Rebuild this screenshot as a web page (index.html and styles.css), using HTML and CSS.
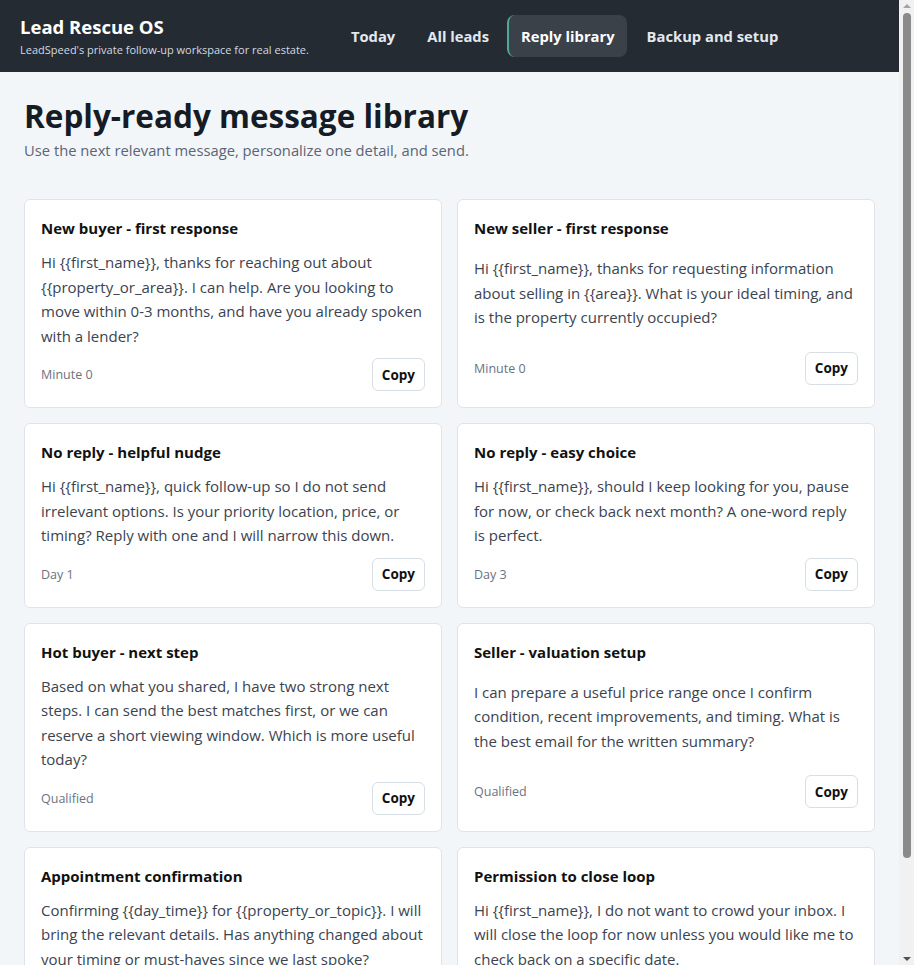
FILE: index.html
```html
<!DOCTYPE html>
<html lang="en">
<head>
  <meta charset="UTF-8">
  <title>Reply library - Lead Rescue OS</title>
  <link rel="stylesheet" href="styles.css">
</head>
<body>
  <header class="topbar">
    <div class="brand">
      <div class="brand-name">Lead Rescue OS</div>
      <div class="brand-tag">LeadSpeed's private follow-up workspace for real estate.</div>
    </div>
    <nav class="nav">
      <a href="#" class="nav-link">Today</a>
      <a href="#" class="nav-link">All leads</a>
      <a href="#" class="nav-link active">Reply library</a>
      <a href="#" class="nav-link">Backup and setup</a>
    </nav>
  </header>

  <main class="page">
    <div class="page-head">
      <h1>Reply-ready message library</h1>
      <p>Use the next relevant message, personalize one detail, and send.</p>
    </div>

    <div class="reply-grid">
      <div class="reply-card">
        <h3>New buyer - first response</h3>
        <p class="reply-text">Hi {{first_name}}, thanks for reaching out about {{property_or_area}}. I can help. Are you looking to move within 0-3 months, and have you already spoken with a lender?</p>
        <div class="reply-foot">
          <span class="reply-stage">Minute 0</span>
          <button class="copy-btn">Copy</button>
        </div>
      </div>

      <div class="reply-card">
        <h3>New seller - first response</h3>
        <p class="reply-text">Hi {{first_name}}, thanks for requesting information about selling in {{area}}. What is your ideal timing, and is the property currently occupied?</p>
        <div class="reply-foot">
          <span class="reply-stage">Minute 0</span>
          <button class="copy-btn">Copy</button>
        </div>
      </div>

      <div class="reply-card">
        <h3>No reply - helpful nudge</h3>
        <p class="reply-text">Hi {{first_name}}, quick follow-up so I do not send irrelevant options. Is your priority location, price, or timing? Reply with one and I will narrow this down.</p>
        <div class="reply-foot">
          <span class="reply-stage">Day 1</span>
          <button class="copy-btn">Copy</button>
        </div>
      </div>

      <div class="reply-card">
        <h3>No reply - easy choice</h3>
        <p class="reply-text">Hi {{first_name}}, should I keep looking for you, pause for now, or check back next month? A one-word reply is perfect.</p>
        <div class="reply-foot">
          <span class="reply-stage">Day 3</span>
          <button class="copy-btn">Copy</button>
        </div>
      </div>

      <div class="reply-card">
        <h3>Hot buyer - next step</h3>
        <p class="reply-text">Based on what you shared, I have two strong next steps. I can send the best matches first, or we can reserve a short viewing window. Which is more useful today?</p>
        <div class="reply-foot">
          <span class="reply-stage">Qualified</span>
          <button class="copy-btn">Copy</button>
        </div>
      </div>

      <div class="reply-card">
        <h3>Seller - valuation setup</h3>
        <p class="reply-text">I can prepare a useful price range once I confirm condition, recent improvements, and timing. What is the best email for the written summary?</p>
        <div class="reply-foot">
          <span class="reply-stage">Qualified</span>
          <button class="copy-btn">Copy</button>
        </div>
      </div>

      <div class="reply-card">
        <h3>Appointment confirmation</h3>
        <p class="reply-text">Confirming {{day_time}} for {{property_or_topic}}. I will bring the relevant details. Has anything changed about your timing or must-haves since we last spoke?</p>
        <div class="reply-foot">
          <span class="reply-stage">Booked</span>
          <button class="copy-btn">Copy</button>
        </div>
      </div>

      <div class="reply-card">
        <h3>Permission to close loop</h3>
        <p class="reply-text">Hi {{first_name}}, I do not want to crowd your inbox. I will close the loop for now unless you would like me to check back on a specific date.</p>
        <div class="reply-foot">
          <span class="reply-stage">Day 14</span>
          <button class="copy-btn">Copy</button>
        </div>
      </div>
    </div>
  </main>

  <div class="scroll-rail">
    <span class="rail-arrow up"></span>
    <div class="rail-thumb"></div>
    <span class="rail-arrow down"></span>
  </div>
</body>
</html>
```
FILE: styles.css
```css
* {
  box-sizing: border-box;
}

body {
  margin: 0;
  padding-right: 15px;
  font-family: 'Open Sans', 'Noto Sans', sans-serif;
  background: #f3f6f9;
  color: #111827;
}

/* top bar */
.topbar {
  display: flex;
  align-items: center;
  gap: 28px;
  height: 72px;
  padding: 0 20px;
  background: #242b33;
  color: #fff;
}

.brand-name {
  font-size: 18.5px;
  font-weight: 700;
  line-height: 24px;
}

.brand-tag {
  font-size: 11px;
  line-height: 16px;
  margin-top: 3px;
  color: #d3d9e0;
}

.nav {
  display: flex;
  gap: 6px;
}

.nav-link {
  padding: 10px 12px;
  border-radius: 8px;
  border-left: 2px solid transparent;
  color: #e3e8ee;
  font-size: 14.75px;
  font-weight: 700;
  line-height: 22px;
  text-decoration: none;
}

.nav-link.active {
  background: #3a4149;
  border-left-color: #4fa99a;
  color: #fff;
}

/* page */
.page {
  padding: 24px;
}

.page-head {
  margin-bottom: 38px;
}

.page-head h1 {
  margin: 0;
  font-size: 31.5px;
  line-height: 40px;
  font-weight: 700;
  color: #161c26;
}

.page-head p {
  margin: 3px 0 0;
  font-size: 14.75px;
  line-height: 22px;
  color: #5b6573;
}

.reply-grid {
  display: grid;
  grid-template-columns: 1fr 1fr;
  gap: 15px;
}

.reply-card {
  display: flex;
  flex-direction: column;
  padding: 16px;
  background: #fff;
  border: 1px solid #dfe4ea;
  border-radius: 6px;
}

.reply-card h3 {
  margin: 0 0 10px;
  font-size: 15px;
  line-height: 24px;
  font-weight: 700;
  color: #111;
}

.reply-text {
  margin: auto 0;
  font-size: 15px;
  line-height: 24.5px;
  color: #3b4350;
}

.reply-foot {
  display: flex;
  align-items: center;
  justify-content: space-between;
  margin: auto 0;
  padding-top: 10px;
}

.reply-stage {
  font-size: 12.5px;
  color: #6b7280;
}

.copy-btn {
  height: 33px;
  padding: 0 9px;
  background: #fff;
  border: 1px solid #d9dee4;
  border-radius: 6px;
  font-family: inherit;
  font-size: 13.5px;
  font-weight: 700;
  color: #111;
  cursor: pointer;
}

.copy-btn:hover {
  background: #f3f6f9;
}

/* window scroll bar */
.scroll-rail {
  position: fixed;
  top: 0;
  right: 0;
  bottom: 0;
  width: 15px;
  display: flex;
  flex-direction: column;
  align-items: center;
  background: #f1f1f1;
}

.rail-thumb {
  width: 8px;
  height: 845px;
  margin: 5px 0 auto;
  border-radius: 4px;
  background: #8a8a8a;
}

.rail-arrow {
  width: 0;
  height: 0;
  border-left: 4px solid transparent;
  border-right: 4px solid transparent;
}

.rail-arrow.up {
  margin-top: 4px;
  border-bottom: 4px solid #a3a3a3;
}

.rail-arrow.down {
  margin-bottom: 4px;
  border-top: 4px solid #505050;
}
```
